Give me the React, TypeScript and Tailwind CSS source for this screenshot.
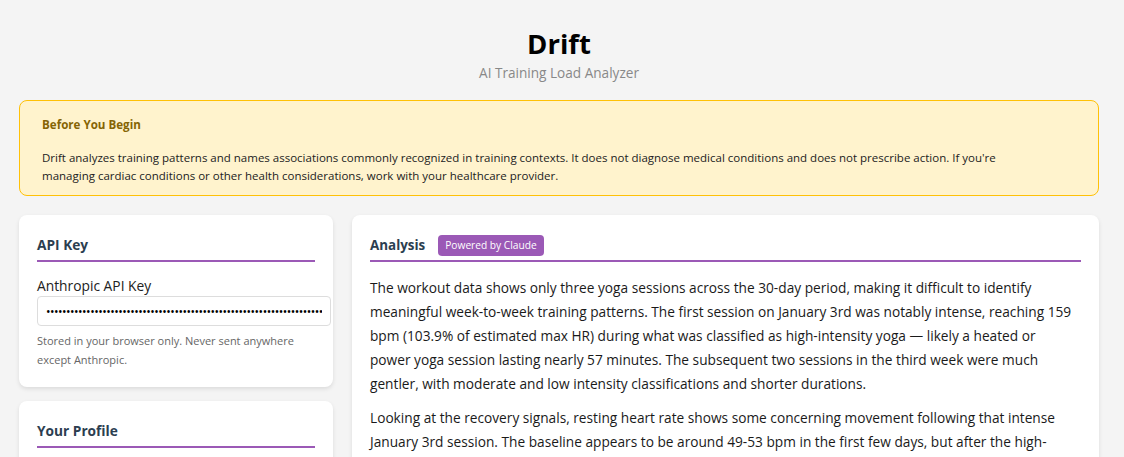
import React from "react";

export default function App() {
  const font = { fontFamily: '"Segoe UI", "Open Sans", "Noto Sans", sans-serif' };
  return (
    <div className="min-h-screen bg-[#f4f4f4] text-[#222]" style={font}>
      <div className="ml-[19px] w-[1080px] pt-[25px]">
        <header className="text-center">
          <h1 className="text-[27.5px] font-bold leading-[38px] text-black">Drift</h1>
          <p className="text-[13.6px] leading-[20px] text-[#888]">AI Training Load Analyzer</p>
        </header>

        <div className="mt-[17px] rounded-[8px] border border-[#ffc107] bg-[#fff3cd] pl-[22px] pr-[60px] pt-[15px] pb-[10px]">
          <h3 className="text-[11.6px] font-bold leading-[18px] text-[#856404]">Before You Begin</h3>
          <p className="mt-[15px] text-[11.5px] leading-[18px] text-[#222]">
            Drift analyzes training patterns and names associations commonly recognized in training contexts. It does not diagnose medical conditions and does not prescribe action. If you're managing cardiac conditions or other health considerations, work with your healthcare provider.
          </p>
        </div>

        <div className="mt-[19px] flex items-start gap-[19px]">
          <div className="flex w-[314px] shrink-0 flex-col gap-[14px]">
            <section className="rounded-[8px] bg-white p-[18px] shadow-[0_2px_4px_rgba(0,0,0,0.1)]">
              <h2 className="border-b-2 border-[#9b59b6] pb-[3px] text-[13.7px] font-bold leading-[24px] text-[#2c3e50]">API Key</h2>
              <label className="mt-[14px] block text-[13.8px] leading-[20px] text-[#222]">Anthropic API Key</label>
              <input
                type="password"
                readOnly
                value="sk-ant-api03-xxxxxxxxxxxxxxxxxxxxxxxxxxxxxxxxxxxxxxxxxxxxxxxxxxxxxxxxxxxxxxxxxxxxxxxxxxxxxxxxxxxxxxxxxx"
                className="block h-[30px] w-[294px] rounded-[4px] border border-[#ddd] bg-white px-[8px] text-[12px] tracking-[-0.5px] text-black outline-none"
              />
              <p className="mt-[5px] text-[11px] leading-[19px] text-[#666]">
                Stored in your browser only. Never sent anywhere except Anthropic.
              </p>
            </section>
            <section className="rounded-[8px] bg-white p-[18px] shadow-[0_2px_4px_rgba(0,0,0,0.1)]">
              <h2 className="border-b-2 border-[#9b59b6] pb-[3px] text-[13.7px] font-bold leading-[24px] text-[#2c3e50]">Your Profile</h2>
              <div className="h-[200px]" />
            </section>
          </div>

          <section className="min-w-0 flex-1 rounded-[8px] bg-white p-[18px] shadow-[0_2px_4px_rgba(0,0,0,0.1)]">
            <div className="flex items-center gap-[13px] border-b-2 border-[#9b59b6] pb-[3px]">
              <h2 className="text-[13.4px] font-bold leading-[24px] text-[#2c3e50]">Analysis</h2>
              <span className="rounded-[4px] bg-[#9b59b6] px-[7px] text-[10.2px] leading-[21px] text-white">Powered by Claude</span>
            </div>
            <div className="mt-[14px] text-[13.7px] leading-[24px] text-[#1a1a1a]">
              <p>
                The workout data shows only three yoga sessions across the 30-day period, making it difficult to identify meaningful week-to-week training patterns. The first session on January 3rd was notably intense, reaching 159 bpm (103.9% of estimated max HR) during what was classified as high-intensity yoga — likely a heated or<br />
                power yoga session lasting nearly 57 minutes. The subsequent two sessions in the third week were much gentler, with moderate and low intensity classifications and shorter durations.
              </p>
              <p className="mt-[10px]">
                Looking at the recovery signals, resting heart rate shows some concerning movement following that intense January 3rd session. The baseline appears to be around 49-53 bpm in the first few days, but after the high-intensity session resting heart rate rose noticeably over the following days before gradually settling back toward baseline.
              </p>
            </div>
          </section>
        </div>
      </div>
    </div>
  );
}
